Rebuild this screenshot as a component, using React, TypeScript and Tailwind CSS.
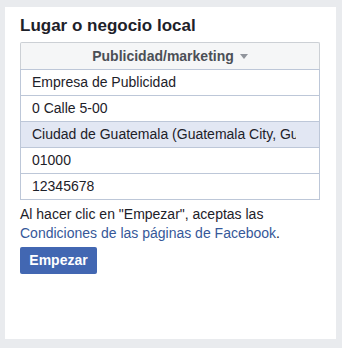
export default function App() {
  const rows = [
    { text: "Empresa de Publicidad", hl: false },
    { text: "0 Calle 5-00", hl: false },
    { text: "Ciudad de Guatemala (Guatemala City, Guatemala)", hl: true },
    { text: "01000", hl: false },
    { text: "12345678", hl: false },
  ];
  return (
    <div
      className="w-[342px] h-[348px] bg-[#e9ebee] pt-[7px] pl-[5px]"
      style={{ fontFamily: '"Liberation Sans", Arial, Helvetica, sans-serif' }}
    >
      <div className="w-[331px] h-[332px] bg-white pl-[15px] pt-[9px]">
        <div className="text-[17px] leading-[20px] font-bold text-[#1d2129]">
          Lugar o negocio local
        </div>
        <div className="w-[300px] mt-[6px]">
          <div className="h-[27px] border border-b-0 border-[#ccd0d5] bg-[#f5f6f7] rounded-t-[2px] flex items-center justify-center">
            <span className="text-[14px] font-bold text-[#4b4f56]">Publicidad/marketing</span>
            <svg width="8" height="5" viewBox="0 0 8 5" className="ml-[6px] mt-[1px]">
              <polygon points="0,0 8,0 4,5" fill="#90949c" />
            </svg>
          </div>
          {rows.map((r, i) => (
            <div
              key={i}
              className={
                "h-[26px] border-x border-t border-[#bdc7d8] pl-[11px] pr-[23px] flex items-center overflow-hidden " +
                (i === rows.length - 1 ? "border-b h-[27px] " : "") +
                (r.hl ? "bg-[#e2e7f3]" : "bg-white")
              }
            >
              <span className="text-[14px] text-[#1d2129] whitespace-nowrap overflow-hidden">{r.text}</span>
            </div>
          ))}
        </div>
        <div className="mt-[5px] text-[14px] leading-[19px] text-[#1d2129]">
          Al hacer clic en "Empezar", aceptas las
          <br />
          <span className="text-[#365899]">Condiciones de las páginas de Facebook</span>.
        </div>
        <button className="mt-[4px] h-[27px] w-[77px] bg-[#4267b2] rounded-[2px] text-white text-[14px] font-bold flex items-center justify-center">
          Empezar
        </button>
      </div>
    </div>
  );
}
